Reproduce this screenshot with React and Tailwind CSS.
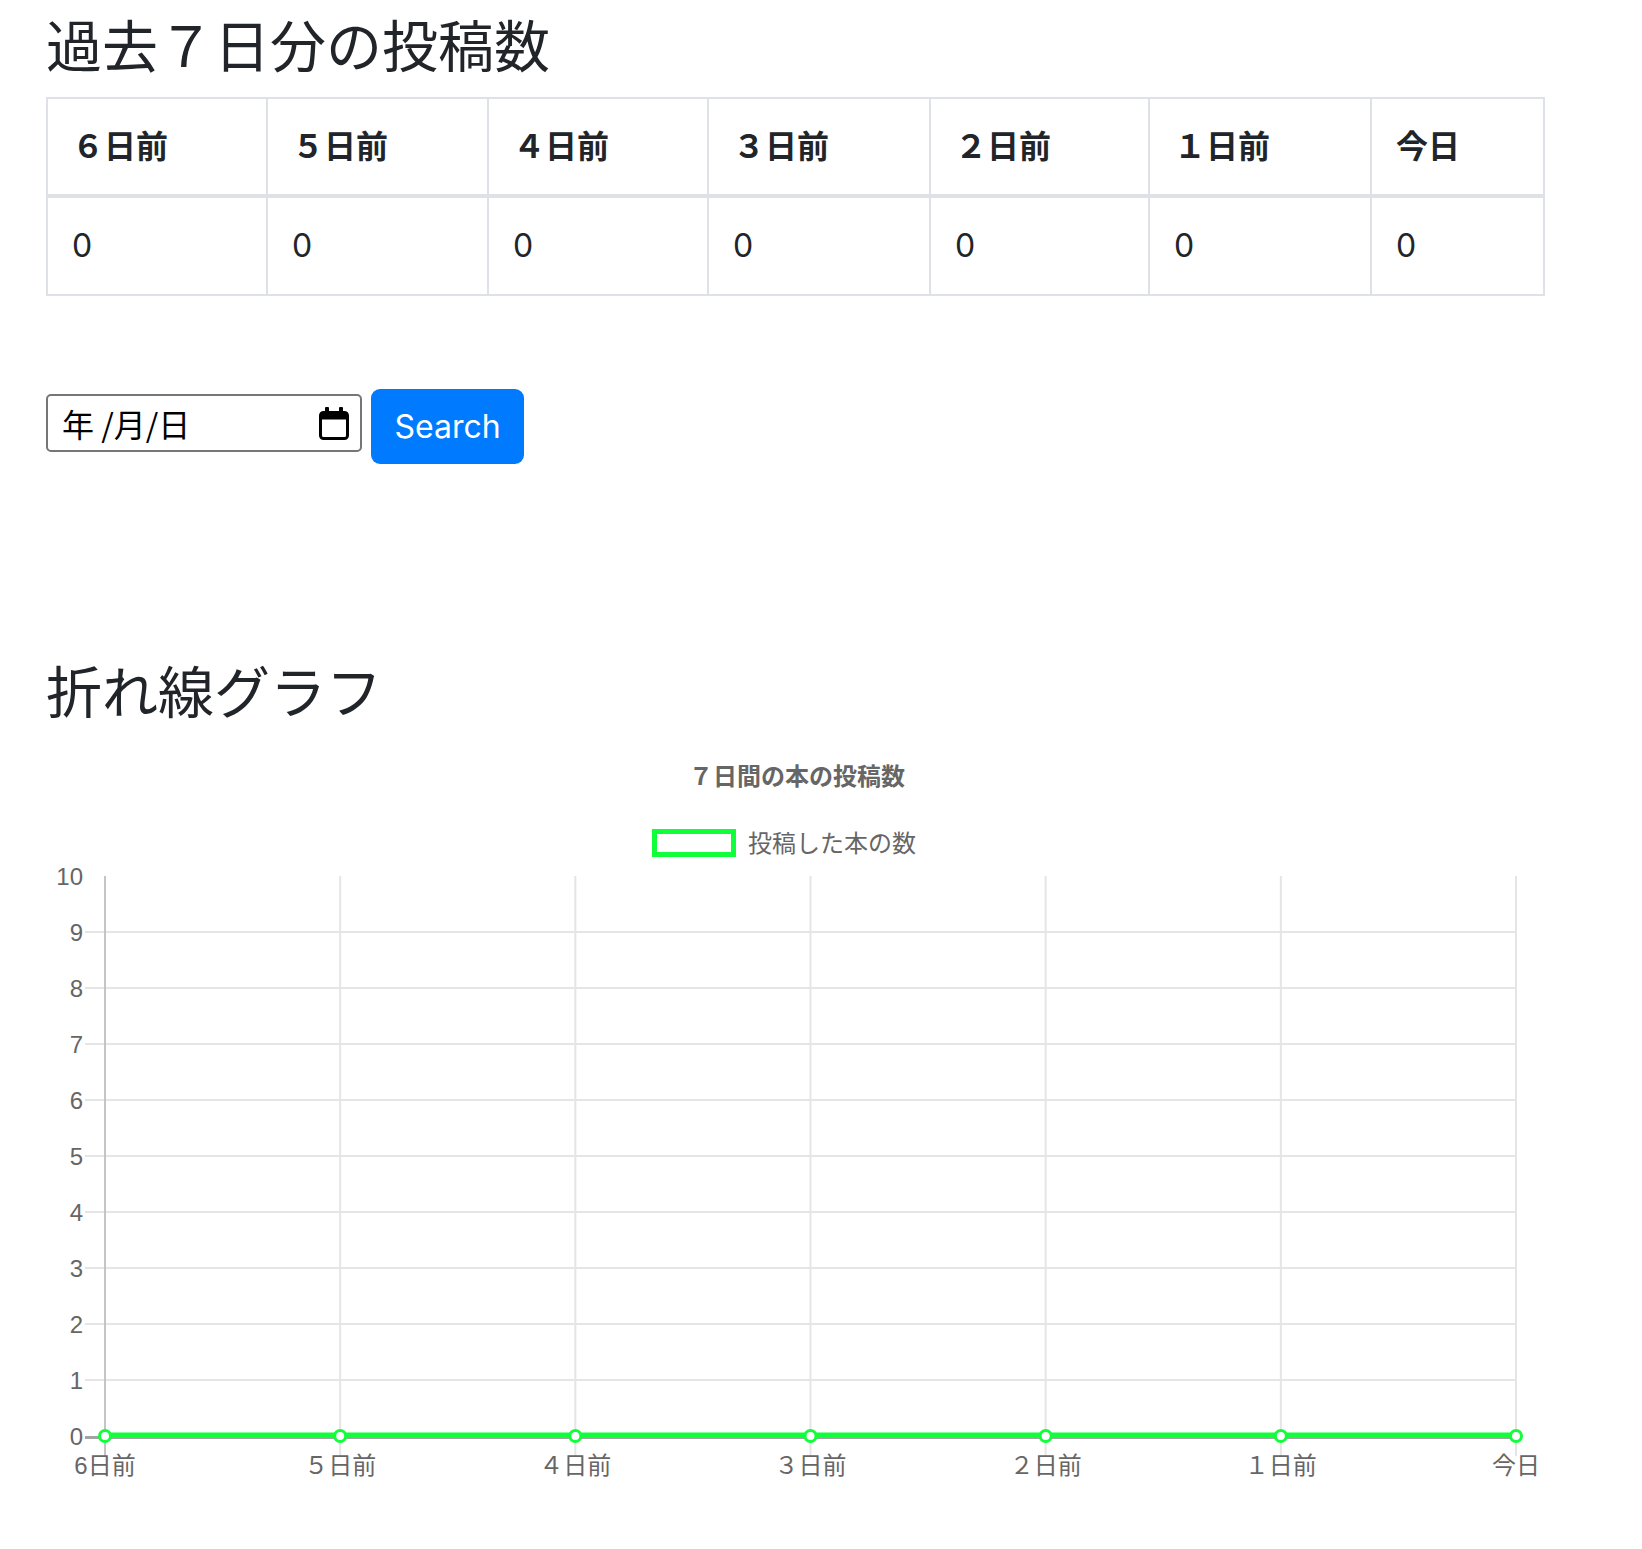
import React from "react";

const headers = ["６日前", "５日前", "４日前", "３日前", "２日前", "１日前", "今日"];
const colWidths = ["w-[220px]", "w-[221px]", "w-[220px]", "w-[222px]", "w-[219px]", "w-[222px]", "w-[173px]"];
const counts = [0, 0, 0, 0, 0, 0, 0];

const xLabels = ["6日前", "５日前", "４日前", "３日前", "２日前", "１日前", "今日"];

// chart geometry (svg coords)
const left = 105;
const right = 1516;
const top = 144;
const bottom = 704;
const step = (right - left) / 6;
const unit = (bottom - top) / 10;

function LineChart() {

    const ys = [10, 9, 8, 7, 6, 5, 4, 3, 2, 1, 0];

    return (

        <svg width="1642" height="770" className="block">

            <text
                x="797"
                y="44"
                textAnchor="middle"
                dominantBaseline="central"
                className="fill-[#666] font-bold text-[24px] font-['Liberation_Sans','Noto_Sans_CJK_JP',sans-serif]"
            >
                ７日間の本の投稿数
            </text>

            <rect x="654.5" y="99.5" width="79" height="23" fill="white" stroke="#11ff3a" strokeWidth="5" />

            <text
                x="748"
                y="111"
                dominantBaseline="central"
                className="fill-[#666] text-[24px] font-['Liberation_Sans','Noto_Sans_CJK_JP',sans-serif]"
            >
                投稿した本の数
            </text>

            {/* horizontal grid */}
            {
                ys.slice(1, 10).map(v => (
                    <line
                        key={v}
                        x1={left - 20}
                        x2={right}
                        y1={bottom - v * unit}
                        y2={bottom - v * unit}
                        stroke="#e5e5e5"
                        strokeWidth="2"
                    />
                ))
            }

            {/* vertical grid */}
            {
                xLabels.map((l, i) => (
                    <line
                        key={l}
                        x1={left + i * step}
                        x2={left + i * step}
                        y1={top}
                        y2={bottom + 20}
                        stroke={i === 0 ? "#c4c4c4" : "#e5e5e5"}
                        strokeWidth="2"
                    />
                ))
            }

            <line x1={left - 20} x2={right} y1={bottom + 1.5} y2={bottom + 1.5} stroke="#a3a3a3" strokeWidth="3" />

            {
                ys.map(v => (
                    <text
                        key={v}
                        x="83"
                        y={bottom - v * unit}
                        textAnchor="end"
                        dominantBaseline="central"
                        className="fill-[#666] text-[24px] font-['Liberation_Sans',sans-serif]"
                    >
                        {v}
                    </text>
                ))
            }

            {
                xLabels.map((l, i) => (
                    <text
                        key={l}
                        x={left + i * step}
                        y={bottom + 29}
                        textAnchor="middle"
                        dominantBaseline="central"
                        className="fill-[#666] text-[24px] font-['Liberation_Sans','Noto_Sans_CJK_JP',sans-serif]"
                    >
                        {l}
                    </text>
                ))
            }

            <line x1={left} x2={right} y1={bottom - 1} y2={bottom - 1} stroke="#11ff3a" strokeWidth="5" />

            {
                counts.map((c, i) => (
                    <circle
                        key={i}
                        cx={left + i * step}
                        cy={bottom - c * unit}
                        r="5.5"
                        fill="white"
                        stroke="#11ff3a"
                        strokeWidth="3"
                    />
                ))
            }

        </svg>

    );

}

export default function App() {

    return (

        <div className="bg-white text-[#212529] font-['Inter','Noto_Sans_CJK_JP',sans-serif] pt-[13px]">

            <div className="pl-[46px]">

                <h2 className="text-[56px] leading-[69px] font-normal">
                    過去７日分の投稿数
                </h2>

                <table className="mt-[15px] w-[1497px] table-fixed border-collapse border-2 border-[#dee2e6]">

                    <thead>

                        <tr>

                            {
                                headers.map((h, i) => (
                                    <th
                                        key={h}
                                        className={colWidths[i] + " h-[98px] border-2 border-b-4 border-[#dee2e6] pl-[24px] text-left text-[32px] font-bold align-middle"}
                                    >
                                        {h}
                                    </th>
                                ))
                            }

                        </tr>

                    </thead>

                    <tbody>

                        <tr>

                            {
                                counts.map((c, i) => (
                                    <td
                                        key={i}
                                        className="h-[99px] border-2 border-[#dee2e6] pl-[24px] text-[32px] align-middle"
                                    >
                                        {c}
                                    </td>
                                ))
                            }

                        </tr>

                    </tbody>

                </table>

                <div className="flex items-start gap-[9px] mt-[93px]">

                    <div className="mt-[5px] w-[316px] h-[58px] border-2 border-[#767676] rounded-[5px] flex items-center justify-between pl-[14px] pr-[11px]">

                        <span className="text-black text-[32px] font-['Noto_Sans_CJK_JP',sans-serif]">
                            年 /月/日
                        </span>

                        <svg width="30" height="33" viewBox="0 0 30 33">
                            <rect x="6" y="0" width="4" height="8" rx="1" fill="black" />
                            <rect x="20" y="0" width="4" height="8" rx="1" fill="black" />
                            <rect x="1.5" y="5.5" width="27" height="26" rx="3" fill="none" stroke="black" strokeWidth="3" />
                            <rect x="1.5" y="5.5" width="27" height="7" fill="black" />
                        </svg>

                    </div>

                    <button className="w-[153px] h-[75px] bg-[#007bff] text-white text-[32px] rounded-[9px]">
                        Search
                    </button>

                </div>

                <h2 className="mt-[195px] mb-[4px] text-[56px] leading-[69px] font-normal">
                    折れ線グラフ
                </h2>

            </div>

            <LineChart />

        </div>

    );

}
